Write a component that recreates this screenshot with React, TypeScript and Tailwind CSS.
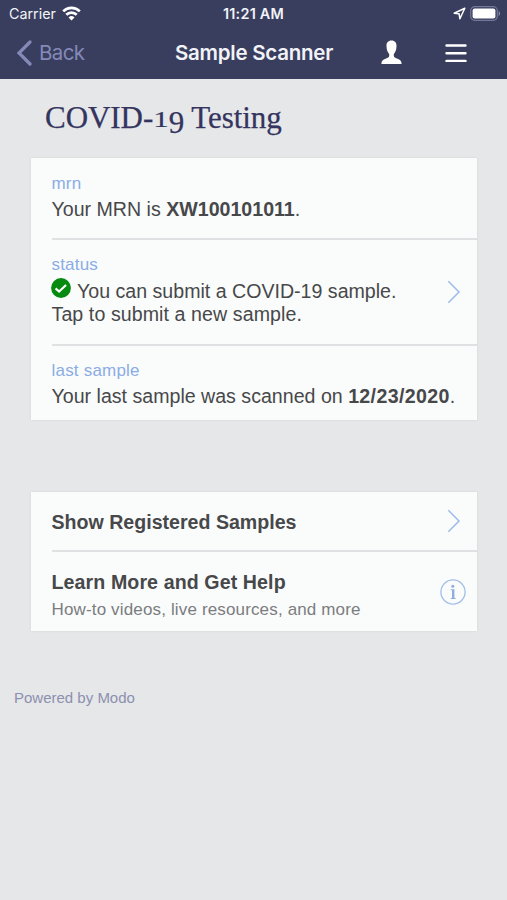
import type { ReactNode } from "react";

const Chevron = () => (
  <svg width="14" height="24" viewBox="0 0 14 24" fill="none" stroke="#9dbbe8" strokeWidth="1.5">
    <path d="M1.3 1.3 12 12 1.3 22.7" />
  </svg>
);

const InfoIcon = () => (
  <svg width="26" height="26" viewBox="0 0 26 26" fill="none">
    <circle cx="13" cy="13" r="12.1" stroke="#a3bfe9" strokeWidth="1.3" />
    <circle cx="12.8" cy="7.2" r="1.5" fill="#8eaee2" />
    <path d="M10.8 10.3h3.6v8.6h1.2v1h-4.8v-1H12v-7.6h-1.2z" fill="#8eaee2" />
  </svg>
);

const CheckIcon = () => (
  <svg className="relative -top-[2px] mr-[6px] -ml-[0.5px] inline-block align-top" width="20" height="20" viewBox="0 0 21 21" fill="none">
    <circle cx="10.5" cy="10.5" r="10.4" fill="#078a10" />
    <path d="m4.8 10.9 3.7 3.4 7.3-7" stroke="#fff" strokeWidth="2.2" />
  </svg>
);

function StatusBar() {
  return (
    <div className="grid h-7 grid-cols-3 items-center pr-[6px] pl-[9px] text-[14.4px] text-[#f2f3f8]">
      <div className="flex items-center gap-[6px]">
        <span className="text-[14.3px]">Carrier</span>
        <svg className="-mt-[2px]" width="19" height="15" viewBox="0 0 19 15" fill="none" stroke="#fff" strokeWidth="2.7">
          <path d="M1.2 5.4a11.7 11.7 0 0 1 16.6 0" />
          <path d="M4.3 8.8a7.4 7.4 0 0 1 10.4 0" />
          <path d="m6.5 11.5 3 3 3-3a4.3 4.3 0 0 0-6 0Z" fill="#fff" stroke="none" />
        </svg>
      </div>
      <div className="-ml-[3px] text-center font-semibold tracking-[0.25px] whitespace-nowrap">11:21 AM</div>
      <div className="-mt-px flex items-center justify-end gap-[4px]">
        <svg width="13" height="13" viewBox="0 0 13 13" fill="none" stroke="#fff" strokeWidth="1.5" strokeLinejoin="round">
          <path d="M11.8 1.2 1.2 6.2l4.9.6.8 5z" />
        </svg>
        <svg width="31" height="15" viewBox="0 0 31 15" fill="none">
          <rect x=".7" y=".7" width="26.6" height="13.6" rx="4" stroke="#747896" strokeWidth="1.2" />
          <rect x="2.6" y="2.6" width="22.8" height="9.8" rx="2" fill="#fff" />
          <path d="M28.7 5v5c1.7-.8 1.7-4.2 0-5Z" fill="#8b8ea9" />
        </svg>
      </div>
    </div>
  );
}

function NavBar() {
  return (
    <div className="flex h-[51px] items-center pb-[2px] pl-4 pr-10">
      <div className="flex w-[159px] items-center gap-[7px] text-[#8489b8]">
        <svg width="16" height="26" viewBox="0 0 16 26" fill="none" stroke="currentColor" strokeWidth="3.2" strokeLinecap="round">
          <path d="M14 2 3 13l11 11" />
        </svg>
        <span className="pt-[2px] text-[20.5px] tracking-[-0.6px]">Back</span>
      </div>
      <h1 className="w-[206px] pt-[2px] text-[20.5px] font-semibold tracking-[-0.25px] whitespace-nowrap text-[#f2f3f8]">
        Sample Scanner
      </h1>
      <svg width="21" height="25" viewBox="0 0 21 25" fill="#fff">
        <path d="M10.5.5c3.5 0 5.2 2.3 5 5.7-.1 3.3-1 6.3-2.7 7.7v2.2c0 1.6 2.5 2.2 4.8 3.2 2.1.9 2.9 2.2 3 4.7H.4c.1-2.500.9-3.800 3-4.700 2.300-1 4.800-1.600 4.800-3.200v-2.200C6.500 12.500 5.600 9.500 5.500 6.200c-.2-3.400 1.500-5.700 5-5.700Z" />
      </svg>
      <svg className="ml-auto" width="22" height="20" viewBox="0 0 22 20" fill="none" stroke="#fff" strokeWidth="2.4" strokeLinecap="round">
        <path d="M1.5 2.500h19M1.500 10.200h19M1.500 17.900h19" />
      </svg>
    </div>
  );
}

function Card({ className = "", children }: { className?: string; children: ReactNode }) {
  return (
    <section className={`ml-[31px] w-[446px] bg-[#fafbfb] pl-[20.5px] shadow-[0_0_2px_#cfd1d3] ${className}`}>
      {children}
    </section>
  );
}

const Label = ({ children }: { children: ReactNode }) => (
  <div className="text-[17px] leading-5 tracking-[0.2px] text-[#8aade5]">{children}</div>
);

export default function App() {
  return (
    <div className="h-[900px] w-[507px] overflow-hidden bg-[#e5e7e9] font-['Liberation_Sans',sans-serif] text-[#47484a]">
      <header className="h-[79px] bg-[#393e5e] font-['Inter',sans-serif]">
        <StatusBar />
        <NavBar />
      </header>

      {/* old-style figures: the 1 sits at x-height, the 9 drops below the baseline */}
      <h2 className="flex h-[79px] items-center pl-[45px] font-['Liberation_Serif',serif] text-[31px] whitespace-nowrap text-[#34345f] [-webkit-text-stroke:0.25px_#34345f]">
        <span className="tracking-[-0.05px]">
          COVID-
          <span className="inline-block origin-bottom-left -translate-y-[4.5px] scale-y-[0.72]">1</span>
          <span className="relative top-[5px]">9</span> Testing
        </span>
      </h2>

      <Card className="h-[262px] text-[19.6px] leading-[23px]">
        <div className="h-[82px] border-b-2 border-[#dfe1e3] pt-[16px]">
          <Label>mrn</Label>
          <p className="mt-1 whitespace-nowrap">
            Your MRN is <b>XW100101011</b>.
          </p>
        </div>
        <div className="flex h-[106px] items-center justify-between border-b-2 border-[#dfe1e3] pr-4">
          <div className="-mt-[3px]">
            <Label>status</Label>
            <p className="mt-[5px] whitespace-nowrap">
              <CheckIcon />
              You can submit a COVID-19 sample.
              <br />
              <span className="tracking-[0.08px]">Tap to submit a new sample.</span>
            </p>
          </div>
          <Chevron />
        </div>
        <div className="pt-[15px]">
          <Label>last sample</Label>
          <p className="mt-1 whitespace-nowrap">
            Your last sample was scanned on <b className="tracking-[0.35px]">12/23/2020</b>.
          </p>
        </div>
      </Card>

      <Card className="mt-[72px] h-[139px]">
        <div className="flex h-[60px] items-center justify-between border-b-2 border-[#dfe1e3] pr-4">
          <b className="pt-[4px] text-[19.6px]">Show Registered Samples</b>
          <Chevron />
        </div>
        <div className="flex h-[79px] items-center justify-between pr-[11px]">
          <div className="pt-[7px] whitespace-nowrap">
            <b className="block text-[19.6px] leading-6 tracking-[0.1px]">Learn More and Get Help</b>
            <p className="mt-[6px] text-[17px] leading-5 tracking-[0.15px] text-[#7b7d80]">
              How-to videos, live resources, and more
            </p>
          </div>
          <InfoIcon />
        </div>
      </Card>

      <footer className="mt-[57px] pl-[14px] text-[15px] leading-5 text-[#8d90af]">Powered by Modo</footer>
    </div>
  );
}
